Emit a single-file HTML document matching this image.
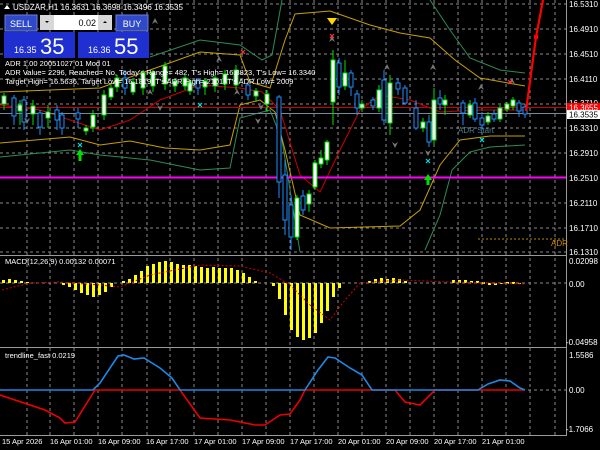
<!DOCTYPE html>
<html><head><meta charset="utf-8"><style>
html,body{margin:0;padding:0;background:#000;width:600px;height:450px;overflow:hidden}
svg{display:block;font-family:"Liberation Sans",sans-serif}
.panel{position:absolute;left:4px;top:14px;width:140px;height:42px}
</style></head><body>
<svg width="600" height="450" viewBox="0 0 600 450" xmlns="http://www.w3.org/2000/svg">
<rect width="600" height="450" fill="#000"/>
<g stroke="#8a8a8a" stroke-width="1" stroke-dasharray="3,3" shape-rendering="crispEdges">
<line x1="27" y1="0" x2="27" y2="435"/><line x1="50" y1="0" x2="50" y2="435"/><line x1="74" y1="0" x2="74" y2="435"/><line x1="98" y1="0" x2="98" y2="435"/><line x1="122" y1="0" x2="122" y2="435"/><line x1="147" y1="0" x2="147" y2="435"/><line x1="170" y1="0" x2="170" y2="435"/><line x1="194" y1="0" x2="194" y2="435"/><line x1="218" y1="0" x2="218" y2="435"/><line x1="242" y1="0" x2="242" y2="435"/><line x1="266" y1="0" x2="266" y2="435"/><line x1="290" y1="0" x2="290" y2="435"/><line x1="314" y1="0" x2="314" y2="435"/><line x1="338" y1="0" x2="338" y2="435"/><line x1="362" y1="0" x2="362" y2="435"/><line x1="386" y1="0" x2="386" y2="435"/><line x1="410" y1="0" x2="410" y2="435"/><line x1="434" y1="0" x2="434" y2="435"/><line x1="458" y1="0" x2="458" y2="435"/><line x1="482" y1="0" x2="482" y2="435"/><line x1="506" y1="0" x2="506" y2="435"/><line x1="530" y1="0" x2="530" y2="435"/><line x1="555" y1="0" x2="555" y2="435"/>
<line x1="0" y1="4" x2="566" y2="4"/><line x1="0" y1="29" x2="566" y2="29"/><line x1="0" y1="54" x2="566" y2="54"/><line x1="0" y1="79" x2="566" y2="79"/><line x1="0" y1="104" x2="566" y2="104"/><line x1="0" y1="128" x2="566" y2="128"/><line x1="0" y1="153" x2="566" y2="153"/><line x1="0" y1="178" x2="566" y2="178"/><line x1="0" y1="203" x2="566" y2="203"/><line x1="0" y1="228" x2="566" y2="228"/><line x1="0" y1="252" x2="566" y2="252"/>
<line x1="0" y1="283" x2="566" y2="283"/><line x1="0" y1="390" x2="566" y2="390"/>
</g>
<!-- separators -->
<g stroke="#9a9a9a" shape-rendering="crispEdges"><line x1="0" y1="255.5" x2="566" y2="255.5"/><line x1="0" y1="347.5" x2="566" y2="347.5"/><line x1="566.5" y1="0" x2="566.5" y2="436"/><line x1="0" y1="435.5" x2="567" y2="435.5"/></g>
<!-- bands -->
<g fill="none" stroke-width="1">
<polyline stroke="#2e8b57" points="0,157 70,150 100,155 150,160 200,170 230,168 240,118 270,110 282,140 300,252"/>
<polyline stroke="#2e8b57" points="150,57 200,40 240,45 262,60 272,55 282,0"/>
<polyline stroke="#2e8b57" points="430,0 450,30 470,58 500,70 525,73"/>
<polyline stroke="#2e8b57" points="425,250 440,215 452,170 470,152 490,147 525,145"/>
<polyline stroke="#c8a000" points="0,92 50,90 100,88 150,70 200,52 240,55 250,82 270,88 285,40 295,14 330,11 370,25 400,33 430,38 455,60 480,78 525,86"/>
<polyline stroke="#c8a000" points="0,143 70,137 100,145 130,141 165,148 200,150 230,145 240,105 260,100 275,112 285,150 300,215 330,228 400,226 420,210 440,165 460,140 490,136 525,136"/>
<polyline stroke="#c00" points="0,105 40,110 100,130 130,120 160,100 200,85 240,88 262,92 280,110 300,175 320,192 340,150 360,110 380,95 410,100 440,112 480,110 525,110"/>
</g>
<line x1="0" y1="107.5" x2="566" y2="107.5" stroke="#c00"/>
<line x1="0" y1="113.5" x2="566" y2="113.5" stroke="#778899"/>
<line x1="0" y1="177.5" x2="566" y2="177.5" stroke="#f0f" stroke-width="2"/>
<line x1="478" y1="239" x2="566" y2="239" stroke="#b8860b" stroke-dasharray="2,2"/>
<text x="551" y="246" fill="#cd8500" font-size="8">ADR</text>
<!-- candles -->
<g stroke-width="1">
<g stroke="#1e90ff" fill="#000">
<line x1="14" y1="95" x2="14" y2="125"/><rect x="12" y="98" width="4" height="18"/>
<line x1="24" y1="96" x2="24" y2="130"/><rect x="22" y="100" width="4" height="22"/>
<line x1="40" y1="110" x2="40" y2="135"/><rect x="38" y="113" width="4" height="14"/>
<line x1="57" y1="105" x2="57" y2="130"/><rect x="55" y="110" width="4" height="10"/>
<line x1="62" y1="112" x2="62" y2="135"/><rect x="60" y="115" width="4" height="13"/>
<line x1="78" y1="108" x2="78" y2="128"/><rect x="76" y="113" width="4" height="6"/>
<line x1="125" y1="70" x2="125" y2="95"/><rect x="123" y="78" width="4" height="10"/>
<line x1="198" y1="78" x2="198" y2="95"/><rect x="196" y="80" width="4" height="8"/>
<line x1="248" y1="82" x2="248" y2="100"/><rect x="246" y="85" width="4" height="10"/>
<line x1="279" y1="95" x2="279" y2="198"/><rect x="277" y="97" width="4" height="85"/>
<line x1="285" y1="160" x2="285" y2="235"/><rect x="283" y="175" width="4" height="45"/>
<line x1="291" y1="195" x2="291" y2="250"/><rect x="289" y="205" width="4" height="32"/>
<line x1="303" y1="190" x2="303" y2="215"/><rect x="301" y="196" width="4" height="14"/>
<line x1="339" y1="58" x2="339" y2="95"/><rect x="337" y="63" width="4" height="24"/>
<line x1="351" y1="70" x2="351" y2="96"/><rect x="349" y="73" width="4" height="14"/>
<line x1="357" y1="90" x2="357" y2="115"/><rect x="355" y="94" width="4" height="14"/>
<line x1="373" y1="97" x2="373" y2="110"/><rect x="371" y="100" width="4" height="6"/>
<line x1="384" y1="70" x2="384" y2="125"/><rect x="382" y="80" width="4" height="40"/>
<line x1="398" y1="78" x2="398" y2="95"/><rect x="396" y="83" width="4" height="6"/>
<line x1="405" y1="85" x2="405" y2="105"/><rect x="403" y="88" width="4" height="15"/>
<line x1="416" y1="100" x2="416" y2="130"/><rect x="414" y="108" width="4" height="20"/>
<line x1="429" y1="115" x2="429" y2="147"/><rect x="427" y="122" width="4" height="20"/>
<line x1="440" y1="90" x2="440" y2="110"/><rect x="438" y="98" width="4" height="6"/>
<line x1="463" y1="100" x2="463" y2="125"/><rect x="461" y="103" width="4" height="10"/>
<line x1="475" y1="98" x2="475" y2="122"/><rect x="473" y="103" width="4" height="16"/>
<line x1="482" y1="112" x2="482" y2="130"/><rect x="480" y="118" width="4" height="7"/>
<line x1="494" y1="110" x2="494" y2="122"/><rect x="492" y="114" width="4" height="5"/>
<line x1="519" y1="100" x2="519" y2="117"/><rect x="517" y="103" width="4" height="8"/>
<line x1="525" y1="104" x2="525" y2="118"/><rect x="523" y="107" width="4" height="7"/>
</g>
<g stroke="#00e000" fill="#fff">
<line x1="4" y1="93" x2="4" y2="110"/><rect x="2" y="96" width="4" height="8"/>
<line x1="20" y1="100" x2="20" y2="125"/><rect x="18" y="105" width="4" height="6"/>
<line x1="33" y1="100" x2="33" y2="125"/><rect x="31" y="106" width="4" height="8"/>
<line x1="48" y1="105" x2="48" y2="128"/><rect x="46" y="112" width="4" height="6"/>
<line x1="86" y1="125" x2="86" y2="135"/><rect x="84" y="128" width="4" height="3"/>
<line x1="93" y1="110" x2="93" y2="132"/><rect x="91" y="115" width="4" height="12"/>
<line x1="104" y1="90" x2="104" y2="120"/><rect x="102" y="95" width="4" height="20"/>
<line x1="111" y1="85" x2="111" y2="100"/><rect x="109" y="88" width="4" height="9"/>
<line x1="117" y1="75" x2="117" y2="92"/><rect x="115" y="78" width="4" height="9"/>
<line x1="133" y1="78" x2="133" y2="95"/><rect x="131" y="82" width="4" height="10"/>
<line x1="143" y1="70" x2="143" y2="95"/><rect x="141" y="73" width="4" height="15"/>
<line x1="153" y1="70" x2="153" y2="92"/><rect x="151" y="72" width="4" height="14"/>
<line x1="165" y1="62" x2="165" y2="90"/><rect x="163" y="66" width="4" height="18"/>
<line x1="175" y1="78" x2="175" y2="92"/><rect x="173" y="81" width="4" height="5"/>
<line x1="185" y1="75" x2="185" y2="90"/><rect x="183" y="78" width="4" height="8"/>
<line x1="190" y1="80" x2="190" y2="95"/><rect x="188" y="83" width="4" height="8"/>
<line x1="205" y1="78" x2="205" y2="95"/><rect x="203" y="81" width="4" height="6"/>
<line x1="215" y1="75" x2="215" y2="92"/><rect x="213" y="78" width="4" height="8"/>
<line x1="225" y1="70" x2="225" y2="90"/><rect x="223" y="74" width="4" height="10"/>
<line x1="236" y1="65" x2="236" y2="90"/><rect x="234" y="70" width="4" height="15"/>
<line x1="256" y1="88" x2="256" y2="102"/><rect x="254" y="91" width="4" height="5"/>
<line x1="267" y1="90" x2="267" y2="112"/><rect x="265" y="94" width="4" height="10"/>
<line x1="297" y1="195" x2="297" y2="240"/><rect x="295" y="198" width="4" height="39"/>
<line x1="309" y1="190" x2="309" y2="212"/><rect x="307" y="194" width="4" height="10"/>
<line x1="315" y1="160" x2="315" y2="190"/><rect x="313" y="163" width="4" height="24"/>
<line x1="321" y1="150" x2="321" y2="168"/><rect x="319" y="158" width="4" height="6"/>
<line x1="327" y1="140" x2="327" y2="165"/><rect x="325" y="142" width="4" height="18"/>
<line x1="333" y1="50" x2="333" y2="125"/><rect x="331" y="60" width="4" height="42"/>
<line x1="345" y1="60" x2="345" y2="90"/><rect x="343" y="73" width="4" height="13"/>
<line x1="362" y1="100" x2="362" y2="112"/><rect x="360" y="104" width="4" height="4"/>
<line x1="379" y1="85" x2="379" y2="112"/><rect x="377" y="90" width="4" height="18"/>
<line x1="390" y1="75" x2="390" y2="135"/><rect x="388" y="83" width="4" height="40"/>
<line x1="423" y1="118" x2="423" y2="132"/><rect x="421" y="122" width="4" height="6"/>
<line x1="434" y1="88" x2="434" y2="145"/><rect x="432" y="100" width="4" height="40"/>
<line x1="445" y1="95" x2="445" y2="115"/><rect x="443" y="100" width="4" height="5"/>
<line x1="470" y1="100" x2="470" y2="118"/><rect x="468" y="105" width="4" height="10"/>
<line x1="488" y1="112" x2="488" y2="125"/><rect x="486" y="116" width="4" height="6"/>
<line x1="500" y1="105" x2="500" y2="122"/><rect x="498" y="108" width="4" height="11"/>
<line x1="507" y1="102" x2="507" y2="112"/><rect x="505" y="104" width="4" height="5"/>
<line x1="513" y1="97" x2="513" y2="110"/><rect x="511" y="100" width="4" height="6"/>
</g>
</g>
<!-- arrows -->
<g fill="#00e000"><path d="M76,155 l4,-6 l4,6 h-2.5 v6 h-3 v-6z"/><path d="M424,180 l4,-6 l4,6 h-2.5 v5 h-3 v-5z"/></g>
<path d="M327,18 h10 l-5,7z" fill="#ffd700"/>
<g fill="#777"><path d="M147,95 l3,-6 l3,6 l-3,-2z"/><path d="M152,24 l3,-6 l3,6 l-3,-2z"/><path d="M216,62 l3,-6 l3,6 l-3,-2z"/><path d="M234,95 l3,-6 l3,6 l-3,-2z"/><path d="M384,70 l3,-6 l3,6 l-3,-2z"/><path d="M430,70 l3,-6 l3,6 l-3,-2z"/><path d="M478,90 l3,-6 l3,6 l-3,-2z"/><path d="M509,84 l3,-6 l3,6 l-3,-2z"/><path d="M329,42 l3,-6 l3,6 l-3,-2z"/>
<path d="M30,49 l3,6 l3,-6 l-3,2z"/><path d="M24,118 l3,6 l3,-6 l-3,2z"/><path d="M157,105 l3,6 l3,-6 l-3,2z"/><path d="M255,118 l3,6 l3,-6 l-3,2z"/><path d="M392,142 l3,6 l3,-6 l-3,2z"/><path d="M425,150 l3,6 l3,-6 l-3,2z"/><path d="M258,104 l3,6 l3,-6 l-3,2z"/></g>
<g stroke="#f33" stroke-width="1.2"><path d="M330,34 l4,4 m0,-4 l-4,4"/><path d="M241,50 l4,4 m0,-4 l-4,4"/><path d="M508,80 l4,4 m0,-4 l-4,4"/></g>
<g stroke="#0dd" stroke-width="1.2"><path d="M198,103 l4,4 m0,-4 l-4,4"/><path d="M78,143 l4,4 m0,-4 l-4,4"/><path d="M426,159 l4,4 m0,-4 l-4,4"/><path d="M480,138 l4,4 m0,-4 l-4,4"/></g>
<text x="458" y="133" fill="#4a7a8a" font-size="8">ADR Start</text>
<polyline points="526,111 536,37 543,0" fill="none" stroke="#f00" stroke-width="2.2"/>
<rect x="534" y="35" width="4" height="4" fill="#f00"/>
<!-- MACD -->
<g fill="#ff0">
<rect x="2" y="280" width="3" height="3"/><rect x="8" y="279" width="3" height="4"/><rect x="14" y="280" width="3" height="3"/><rect x="20" y="281" width="3" height="2"/><rect x="26" y="282" width="3" height="1"/>
<rect x="62" y="283" width="3" height="2"/><rect x="68" y="283" width="3" height="4"/><rect x="74" y="283" width="3" height="7"/><rect x="80" y="283" width="3" height="10"/><rect x="86" y="283" width="3" height="12"/><rect x="92" y="283" width="3" height="14"/><rect x="98" y="283" width="3" height="12"/><rect x="104" y="283" width="3" height="9"/><rect x="110" y="283" width="3" height="4"/>
<rect x="122" y="281" width="3" height="2"/><rect x="128" y="279" width="3" height="4"/><rect x="134" y="275" width="3" height="8"/><rect x="140" y="271" width="3" height="12"/><rect x="146" y="266" width="3" height="17"/><rect x="152" y="264" width="3" height="19"/><rect x="158" y="262" width="3" height="21"/><rect x="164" y="261" width="3" height="22"/><rect x="170" y="262" width="3" height="21"/><rect x="176" y="264" width="3" height="19"/><rect x="182" y="265" width="3" height="18"/><rect x="188" y="265" width="3" height="18"/><rect x="194" y="266" width="3" height="17"/><rect x="200" y="267" width="3" height="16"/><rect x="206" y="268" width="3" height="15"/><rect x="212" y="267" width="3" height="16"/><rect x="218" y="268" width="3" height="15"/><rect x="224" y="268" width="3" height="15"/><rect x="230" y="268" width="3" height="15"/><rect x="236" y="270" width="3" height="13"/><rect x="242" y="273" width="3" height="10"/><rect x="248" y="277" width="3" height="6"/><rect x="254" y="281" width="3" height="2"/>
<rect x="272" y="283" width="3" height="3"/><rect x="278" y="283" width="3" height="16"/><rect x="284" y="283" width="3" height="32"/><rect x="290" y="283" width="3" height="47"/><rect x="296" y="283" width="3" height="54"/><rect x="302" y="283" width="3" height="57"/><rect x="308" y="283" width="3" height="55"/><rect x="314" y="283" width="3" height="50"/><rect x="320" y="283" width="3" height="40"/><rect x="326" y="283" width="3" height="28"/><rect x="332" y="283" width="3" height="14"/><rect x="338" y="283" width="3" height="5"/>
<rect x="368" y="281" width="3" height="2"/><rect x="374" y="279" width="3" height="4"/><rect x="380" y="278" width="3" height="5"/><rect x="386" y="279" width="3" height="4"/><rect x="392" y="278" width="3" height="5"/><rect x="398" y="279" width="3" height="4"/><rect x="404" y="281" width="3" height="2"/><rect x="452" y="280" width="3" height="3"/><rect x="458" y="280" width="3" height="3"/><rect x="464" y="280" width="3" height="3"/><rect x="470" y="281" width="3" height="2"/><rect x="476" y="281" width="3" height="2"/><rect x="482" y="282" width="3" height="2"/><rect x="488" y="283" width="3" height="2"/><rect x="494" y="283" width="3" height="2"/><rect x="500" y="283" width="3" height="1"/><rect x="506" y="282" width="3" height="2"/><rect x="512" y="282" width="3" height="2"/><rect x="518" y="283" width="3" height="1"/>
</g>
<polyline points="2,290 30,283 60,282 100,285 120,287 150,275 200,265 240,266 270,273 290,285 310,305 330,320 345,300 360,283 400,280 450,282 525,284" fill="none" stroke="#c00" stroke-dasharray="2,2"/>
<text x="5" y="264" fill="#fff" font-size="7.5">MACD(12,26,9) 0.00132 0.00071</text>
<!-- trendline -->
<polyline points="0,395 45,410 60,418 65,423 75,422 95,390 180,390 200,418 230,420 255,425 265,425 280,415 290,414 300,400 305,390 395,390 405,402 420,405 435,390 525,390" fill="none" stroke="#e00" stroke-width="1.6"/>
<polyline points="0,390 93,390 100,383 118,356 124,355 134,359 144,358 160,368 172,378 180,390 305,390 318,370 328,357 335,358 350,368 362,375 372,390 478,390 488,384 500,380 510,381 520,388 525,390" fill="none" stroke="#1e88e5" stroke-width="1.6"/>
<text x="5" y="358" fill="#fff" font-size="7.5">trendline_fast 0.0219</text>
<!-- price axis -->
<g fill="#fff" font-size="8">
<text x="569" y="7">16.5310</text><text x="569" y="32">16.4910</text><text x="569" y="57">16.4510</text><text x="569" y="82">16.4110</text><text x="569" y="106">16.3710</text><text x="569" y="131">16.3310</text><text x="569" y="156">16.2910</text><text x="569" y="181">16.2510</text><text x="569" y="206">16.2110</text><text x="569" y="231">16.1710</text><text x="569" y="255">16.1310</text>
<text x="569" y="264">0.02098</text><text x="569" y="287">0.00</text><text x="566" y="345">-0.04958</text>
<text x="569" y="358">1.5586</text><text x="569" y="393">0.00</text><text x="566" y="432">-1.7066</text>
</g>
<rect x="567" y="103" width="33" height="9" fill="#f00"/><text x="569" y="110.5" fill="#fff" font-size="8">16.3655</text>
<rect x="567" y="110" width="33" height="9" fill="#fff"/><text x="569" y="117.5" fill="#000" font-size="8">16.3535</text>
<!-- time axis -->
<g fill="#fff" font-size="7.5">
<text x="2" y="444">15 Apr 2026</text><text x="50" y="444">16 Apr 01:00</text><text x="98" y="444">16 Apr 09:00</text><text x="146" y="444">16 Apr 17:00</text><text x="194" y="444">17 Apr 01:00</text><text x="242" y="444">17 Apr 09:00</text><text x="290" y="444">17 Apr 17:00</text><text x="338" y="444">20 Apr 01:00</text><text x="386" y="444">20 Apr 09:00</text><text x="434" y="444">20 Apr 17:00</text><text x="482" y="444">21 Apr 01:00</text>
</g>
<!-- header text -->
<path d="M4,9 l3,-4 l3,4z" fill="#fff"/>
<text x="13" y="10" fill="#fff" font-size="8">USDZAR,H1  16.3631 16.3698 16.3496 16.3535</text>
<text x="5" y="66" fill="#fff" font-size="7.5">ADR 1.00 20051027 01 Mod 01</text>
<text x="5" y="75" fill="#fff" font-size="7.5">ADR Value= 2296, Reached= No, Today's Range= 482, T's High= 16.3823, T's Low= 16.3340</text>
<text x="5" y="84" fill="#fff" font-size="7.5">Target High= 16.5636, Target Low= 16.1819, T's ADR High= 2101, T's ADR Low= 2009</text>
<!-- trade panel -->
<rect x="5" y="15" width="32" height="16" fill="#2f49c8" stroke="#6d7fe0"/>
<text x="21" y="27" fill="#fff" font-size="9" text-anchor="middle">SELL</text>
<rect x="40" y="15" width="14" height="15" fill="#d8d8d8"/><path d="M45,21 h4 l-2,2z" fill="#000"/>
<rect x="54" y="15" width="44" height="15" fill="#fff"/><text x="96" y="26" fill="#000" font-size="9" text-anchor="end">0.02</text>
<rect x="98" y="15" width="14" height="15" fill="#d8d8d8"/><path d="M103,23 h4 l-2,-2z" fill="#000"/>
<rect x="116" y="15" width="32" height="16" fill="#2f49c8" stroke="#6d7fe0"/>
<text x="132" y="27" fill="#fff" font-size="9" text-anchor="middle">BUY</text>
<rect x="4" y="32" width="71" height="26" fill="#1f2fd0"/>
<rect x="78" y="32" width="71" height="26" fill="#1f2fd0"/>
<text x="14" y="53" fill="#fff" font-size="9">16.35</text><text x="40" y="54" fill="#fff" font-size="22">35</text>
<text x="88" y="53" fill="#fff" font-size="9">16.36</text><text x="114" y="54" fill="#fff" font-size="22">55</text>
</svg>
</body></html>
